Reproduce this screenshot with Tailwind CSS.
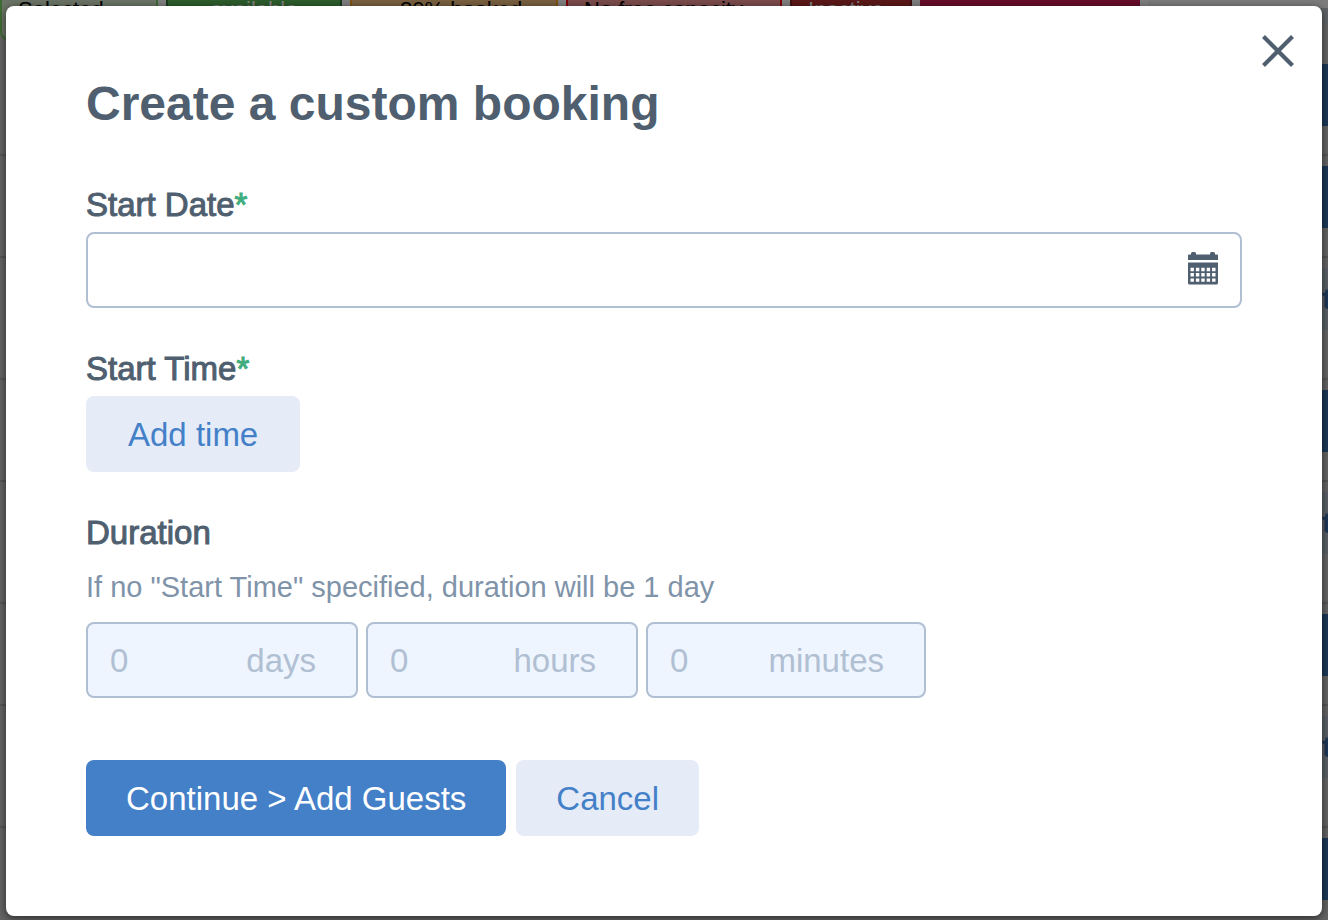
<!DOCTYPE html>
<html lang="en">
<head>
<meta charset="utf-8">
<meta name="viewport" content="width=device-width, initial-scale=1">
<title>Create a custom booking</title>
<script src="https://cdn.jsdelivr.net/npm/@tailwindcss/browser@4"></script>
</head>
<body class="h-screen overflow-hidden bg-[#646464] font-['Liberation_Sans',Arial,sans-serif] text-[33px] leading-[42px] text-[#4f5f6f]">

<!-- Dimmed calendar page behind the dialog -->
<div class="fixed inset-0 flex flex-col overflow-hidden bg-[#646464]" aria-hidden="true">
  <div class="-mt-8 flex h-10 shrink-0 gap-2 bg-[#808080] text-[22px] leading-[80px] text-black">
    <div class="h-18 w-[158px] rounded-lg border-2 border-[#3f6b35] bg-[#6b7466] pl-4">Selected</div>
    <div class="h-18 w-[176px] border-2 border-[#1a3a1a] bg-[#2c5c2c] text-center text-[#808080]">available</div>
    <div class="h-18 w-[208px] border-2 border-[#805010] bg-[#7a6040] pl-12">80% booked</div>
    <div class="h-18 w-[216px] border-2 border-[#800008] bg-[#7c4c4c] pl-4">No free capacity</div>
    <div class="h-18 w-[122px] border-2 border-[#401010] bg-[#5c1818] pl-4 text-[#808080]">Inactive</div>
    <div class="h-18 w-[220px] bg-[#660c28]"></div>
    <div class="h-14 grow bg-[#7c7c7c] pl-11 text-[26px] leading-[46px] font-bold text-[#6c747e]">Details</div>
  </div>
  <div class="flex shrink-0 flex-col text-[30px] text-[#1c3858]">
    <div class="ml-auto h-4 w-4 bg-[#606468]"></div>
    <div class="h-10"></div>
    <div class="ml-auto h-[62px] w-10 bg-[#1c3858]"></div>
    <div class="h-[30px] border-b-2 border-[#565656]"></div>
    <div class="h-[10px]"></div>
    <div class="ml-auto h-[62px] w-10 bg-[#1c3858]"></div>
    <div class="h-[30px] border-b-2 border-[#565656]"></div>
    <div class="h-[10px]"></div>
    <div class="ml-auto h-[62px] w-10 overflow-hidden bg-[#5a6066] pl-[34px] leading-[62px] font-bold">t</div>
    <div class="h-[50px] border-b-2 border-[#565656]"></div>
    <div class="h-[10px]"></div>
    <div class="ml-auto h-[62px] w-10 bg-[#1c3858]"></div>
    <div class="h-[30px] border-b-2 border-[#565656]"></div>
    <div class="h-[10px]"></div>
    <div class="ml-auto h-[62px] w-10 overflow-hidden bg-[#5a6066] pl-[34px] leading-[62px] font-bold">t</div>
    <div class="h-[50px] border-b-2 border-[#565656]"></div>
    <div class="h-[10px]"></div>
    <div class="ml-auto h-[62px] w-10 bg-[#1c3858]"></div>
    <div class="h-[30px] border-b-2 border-[#565656]"></div>
    <div class="h-[10px]"></div>
    <div class="ml-auto h-[62px] w-10 overflow-hidden bg-[#5a6066] pl-[34px] leading-[62px] font-bold">t</div>
    <div class="h-[50px] border-b-2 border-[#565656]"></div>
    <div class="h-[10px]"></div>
    <div class="ml-auto h-[62px] w-10 bg-[#1c3858]"></div>
  </div>
</div>

<main role="dialog" aria-modal="true" aria-labelledby="title" class="fixed inset-x-[6px] top-[6px] bottom-1 overflow-hidden rounded-lg bg-white shadow-[0_2px_8px_rgba(0,0,0,0.6)]">
  <button type="button" aria-label="Close" class="absolute top-[29px] right-7 size-8 text-[#4f5f6f]">
    <svg viewBox="0 0 32 32" class="size-8" fill="none" stroke="currentColor" stroke-width="4.200"><path d="M1.500 1.500 30.500 30.500M30.500 1.500 1.500 30.500"/></svg>
  </button>
  <form class="px-20 pt-[70px]">
    <h1 id="title" class="text-5xl leading-[56px] font-bold">Create a custom booking</h1>

    <div class="mt-[52px]">
      <label for="date" class="block [-webkit-text-stroke:1px_currentColor]">Start Date<span class="text-[#3fad7d]">*</span></label>
      <div class="mt-[6px] flex h-[76px] items-center rounded-lg border-2 border-[#b0bfd2] pr-[22px]">
        <input id="date" type="text" class="h-full min-w-0 grow rounded-lg px-5 outline-none">
        <svg viewBox="0 0 30 33" class="mb-1 h-[33px] w-[30px] shrink-0 text-[#4f5f6f]" aria-hidden="true">
          <path fill="currentColor" d="M1 2.500h2V1.500Q3 0 4.500 0h2Q8 0 8 1.500v1h14v-1Q22 0 23.500 0h2Q27 0 27 1.500v1h2q1 0 1 1V8H0V3.500q0-1 1-1zM0 10.500h30V31q0 1.500-1.500 1.500h-27Q0 32.500 0 31z"/>
          <path stroke="#fff" stroke-width="3.400" stroke-dasharray="3.400 2" d="M2.500 17.500h25.200M2.500 22.800h25.200M2.500 28.100h25.200"/>
        </svg>
      </div>
    </div>

    <div class="mt-10">
      <div class="[-webkit-text-stroke:1px_currentColor]">Start Time<span class="text-[#3fad7d]">*</span></div>
      <button type="button" class="mt-[6px] h-[76px] rounded-lg bg-[#e5ecf8] px-[42px] pt-[2px] text-[#4480c8]">Add time</button>
    </div>

    <fieldset class="mt-10">
      <legend class="[-webkit-text-stroke:1px_currentColor]">Duration</legend>
      <p class="mt-[14px] text-[29px] leading-[38px] text-[#7f93a9]">If no "Start Time" specified, duration will be 1 day</p>
      <div class="mt-4 flex gap-2 text-[#b0bfd2]">
        <label class="flex h-[76px] w-[272px] items-center rounded-lg border-2 border-[#b0bfd2] bg-[#eef5fe] pt-[2px] pr-10 pl-[22px]"><input type="text" placeholder="0" class="w-0 min-w-0 grow outline-none placeholder:text-[#b0bfd2]"><span>days</span></label>
        <label class="flex h-[76px] w-[272px] items-center rounded-lg border-2 border-[#b0bfd2] bg-[#eef5fe] pt-[2px] pr-10 pl-[22px]"><input type="text" placeholder="0" class="w-0 min-w-0 grow outline-none placeholder:text-[#b0bfd2]"><span>hours</span></label>
        <label class="flex h-[76px] w-[280px] items-center rounded-lg border-2 border-[#b0bfd2] bg-[#eef5fe] pt-[2px] pr-10 pl-[22px]"><input type="text" placeholder="0" class="w-0 min-w-0 grow outline-none placeholder:text-[#b0bfd2]"><span>minutes</span></label>
      </div>
    </fieldset>

    <div class="mt-[62px] flex gap-[10px]">
      <button type="submit" class="h-[76px] rounded-lg bg-[#4480c8] px-10 pt-[2px] text-white">Continue &gt; Add Guests</button>
      <button type="button" class="h-[76px] rounded-lg bg-[#e5ecf8] px-10 pt-[2px] text-[#4480c8]">Cancel</button>
    </div>
  </form>
</main>
</body>
</html>
